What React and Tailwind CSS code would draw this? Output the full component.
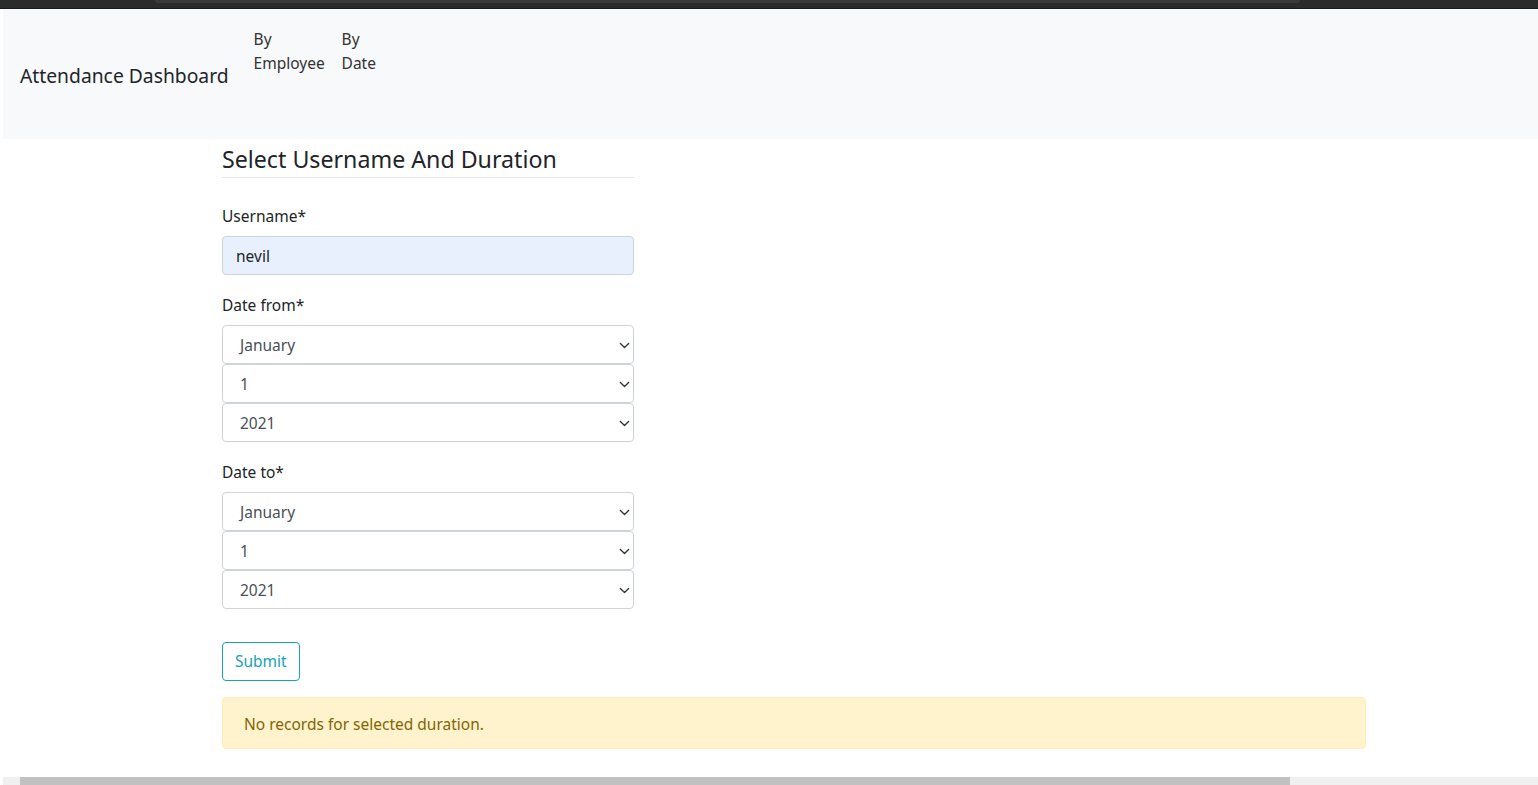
import React, { useState } from "react";

const font = { fontFamily: '"Noto Sans", "Open Sans", sans-serif' };

const Chevron = () => (
  <svg viewBox="0 0 16 16" className="w-[11px] h-[11px]" fill="none">
    <path d="M2 5l6 6 6-6" stroke="#343a40" strokeWidth="2" strokeLinecap="round" strokeLinejoin="round" />
  </svg>
);

const SelectBox = ({ value }) => (
  <div className="h-[39px] w-full border border-[#ced4da] rounded-[4px] bg-white flex items-center justify-between pl-[17px] pr-[3px] pt-[2px] text-[15.5px] text-[#495057]">
    <span>{value}</span>
    <Chevron />
  </div>
);

const DateGroup = ({ label, top }) => (
  <div className={top}>
    <div className="text-[15.5px] text-[#212529] leading-6 mb-[8px]">{label}</div>
    <div className="flex flex-col">
      <SelectBox value="January" />
      <SelectBox value="1" />
      <SelectBox value="2021" />
    </div>
  </div>
);

const App = () => {
  const [username] = useState("nevil");

  return (
    <div className="w-[1538px] h-[785px] overflow-hidden bg-white flex flex-col" style={font}>
      {/* browser strip */}
      <div className="h-[9px] bg-[#2b2b2b] border-b border-[#1a1a1a] flex">
        <div className="ml-[155px] w-[1145px] h-[3px] bg-[#3a3a3a] rounded-b-[6px]" />
      </div>

      <div className="flex-1 flex flex-col pl-[3px]">
        {/* navbar */}
        <nav className="h-[130px] bg-[#f8f9fa] flex items-center px-[17px]">
          <div className="text-[19.3px] text-[#212529] mr-[25px] mt-[5px]">Attendance Dashboard</div>
          <div className="self-start mt-[18px] flex gap-[16px] text-[15.5px] leading-6 text-[#333]">
            <div className="w-[72px]">By<br />Employee</div>
            <div>By<br />Date</div>
          </div>
        </nav>

        {/* content */}
        <main className="flex-1 pl-[219px]">
          <div className="w-[412px]">
            <h2 className="text-[23.2px] text-[#212529] leading-[30px] pt-[5px] pb-[3px] border-b border-[#e5e7eb]">
              Select Username And Duration
            </h2>
            <div className="mt-[26px]">
              <div className="text-[15.5px] text-[#212529] leading-6 mb-[8px]">Username*</div>
              <div className="h-[39px] w-full border border-[#ced4da] rounded-[4px] bg-[#e8f0fe] flex items-center px-[13px] pt-[2px] text-[15.5px] text-[#212529]">
                {username}
              </div>
            </div>
            <DateGroup label="Date from*" top="mt-[18px]" />
            <DateGroup label="Date to*" top="mt-[18px]" />
            <button className="mt-[33px] h-[39px] px-[12px] pt-[1px] border border-[#17a2b8] rounded-[4px] text-[15.5px] text-[#17a2b8] bg-white">
              Submit
            </button>
          </div>
          <div className="mt-[16px] w-[1144px] h-[52px] bg-[#fff3cd] border border-[#ffeeba] rounded-[4px] flex items-center px-[21px] pt-[3px] text-[15.5px] text-[#856404]">
            No records for selected duration.
          </div>
        </main>

        {/* horizontal scrollbar */}
        <div className="h-[8px] bg-[#f0f0f0] flex">
          <div className="ml-[17px] w-[1270px] bg-[#c1c1c1]" />
        </div>
      </div>
    </div>
  );
};

export default App;
